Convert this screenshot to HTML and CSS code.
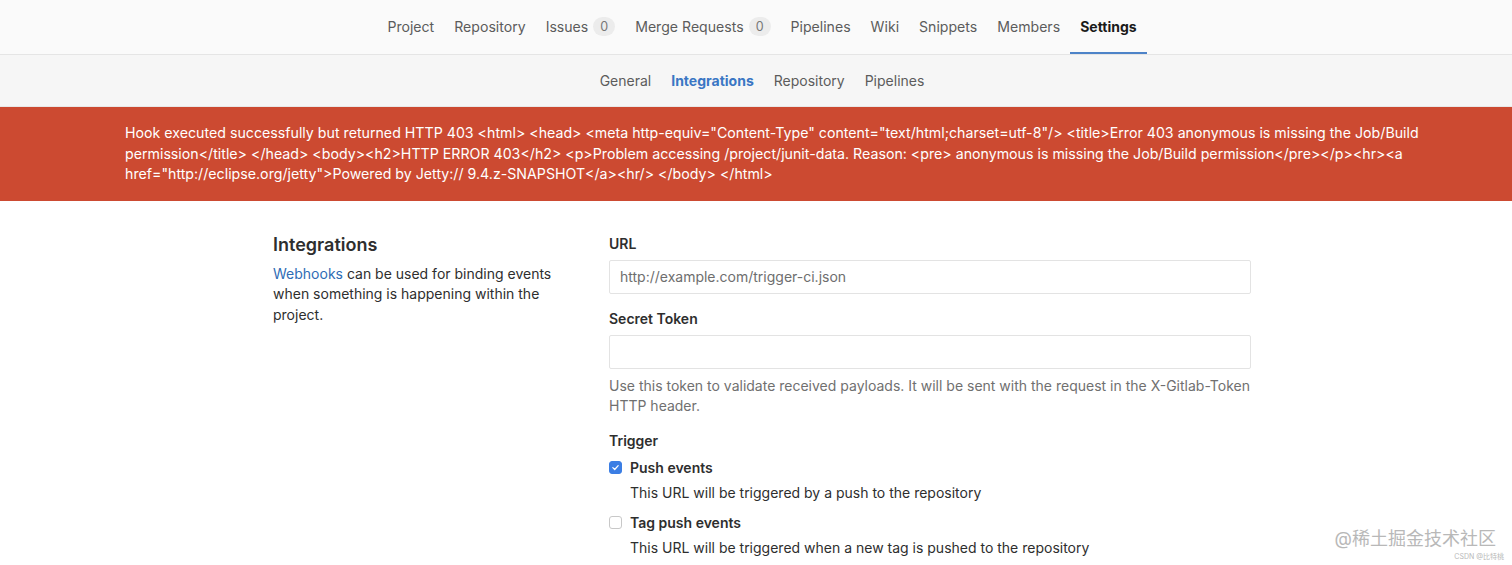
FILE: index.html
```html
<!DOCTYPE html>
<html>
<head>
<meta charset="utf-8">
<link rel="stylesheet" href="styles.css">
</head>
<body>
<header class="topnav">
  <nav class="nav-inner">
    <a class="nav-item">Project</a>
    <a class="nav-item">Repository</a>
    <a class="nav-item">Issues <span class="badge">0</span></a>
    <a class="nav-item">Merge Requests <span class="badge">0</span></a>
    <a class="nav-item">Pipelines</a>
    <a class="nav-item">Wiki</a>
    <a class="nav-item">Snippets</a>
    <a class="nav-item">Members</a>
    <a class="nav-item active">Settings</a>
  </nav>
</header>
<div class="subnav">
  <nav class="nav-inner">
    <a class="sub-item">General</a>
    <a class="sub-item active">Integrations</a>
    <a class="sub-item">Repository</a>
    <a class="sub-item">Pipelines</a>
  </nav>
</div>
<div class="flash">
  <span class="flash-line">Hook executed successfully but returned HTTP 403 &lt;html&gt; &lt;head&gt; &lt;meta http-equiv="Content-Type" content="text/html;charset=utf-8"/&gt; &lt;title&gt;Error 403 anonymous is missing the Job/Build</span>
  <span class="flash-line">permission&lt;/title&gt; &lt;/head&gt; &lt;body&gt;&lt;h2&gt;HTTP ERROR 403&lt;/h2&gt; &lt;p&gt;Problem accessing /project/junit-data. Reason: &lt;pre&gt; anonymous is missing the Job/Build permission&lt;/pre&gt;&lt;/p&gt;&lt;hr&gt;&lt;a</span>
  <span class="flash-line">href="http://eclipse.org/jetty"&gt;Powered by Jetty:// 9.4.z-SNAPSHOT&lt;/a&gt;&lt;hr/&gt; &lt;/body&gt; &lt;/html&gt;</span>
</div>
<main class="content">
  <section class="intro">
    <h4 class="intro-title">Integrations</h4>
    <p class="intro-text"><a class="link">Webhooks</a> can be used for binding events when something is happening within the project.</p>
  </section>
  <section class="form">
    <div class="field">
      <label class="label">URL</label>
      <div class="input"><span class="placeholder">http://example.com/trigger-ci.json</span></div>
    </div>
    <div class="field">
      <label class="label">Secret Token</label>
      <div class="input"></div>
      <p class="help">Use this token to validate received payloads. It will be sent with the request in the X-Gitlab-Token HTTP header.</p>
    </div>
    <div class="field trigger">
      <label class="label">Trigger</label>
      <div class="check-row">
        <span class="checkbox checked">
          <svg viewBox="0 0 14 14" width="14" height="14"><path d="M3.6 7.2 L6 9.5 L10.4 4.6" fill="none" stroke="#fff" stroke-width="1.6" stroke-linecap="round" stroke-linejoin="round"/></svg>
        </span>
        <span class="check-label">Push events</span>
      </div>
      <p class="check-help">This URL will be triggered by a push to the repository</p>
      <div class="check-row second">
        <span class="checkbox"></span>
        <span class="check-label">Tag push events</span>
      </div>
      <p class="check-help">This URL will be triggered when a new tag is pushed to the repository</p>
    </div>
  </section>
</main>
<div class="watermark">
  <span class="wm-main">@稀土掘金技术社区</span>
  <span class="wm-sub">CSDN @比特桃</span>
</div>
</body>
</html>
```
FILE: styles.css
```css
html, body {
  margin: 0;
  padding: 0;
  background: #fff;
  height: 565px;
  overflow: hidden;
}
body {
  font-family: Inter, "Liberation Sans", "Noto Sans CJK SC", sans-serif;
  font-size: 14px;
  color: #2e2e2e;
  position: relative;
}
.topnav {
  background: #fafafa;
  border-bottom: 1px solid #e5e5e5;
  height: 54px;
}
.nav-inner {
  display: flex;
  justify-content: center;
  height: 100%;
  padding-left: 12px;
}
.nav-item {
  display: flex;
  align-items: center;
  padding: 0 10px;
  color: #5c5c5c;
  font-size: 14.1px;
  border-bottom: 2px solid transparent;
  box-sizing: border-box;
  height: 54px;
  padding-top: 1px;
}
.nav-item.active {
  color: #1a1a1a;
  font-weight: 700;
  font-size: 14px;
  border-bottom-color: #4d83c8;
}
.badge {
  display: inline-block;
  margin-left: 5px;
  background: #ececec;
  color: #777;
  font-size: 12.5px;
  border-radius: 10px;
  padding: 0 7px;
  line-height: 19px;
}
.subnav {
  background: #f6f6f6;
  height: 51px;
  border-bottom: 1px solid #e8e8e8;
}
.sub-item {
  display: flex;
  align-items: center;
  padding: 0 10px;
  color: #5c5c5c;
  font-size: 14px;
}
.sub-item.active {
  color: #3a76c4;
  font-weight: 700;
}
.flash {
  background: #cc4a31;
  color: #fff;
  padding: 16px 0 16px 125px;
  line-height: 20.5px;
  font-size: 14.2px;
}
.flash-line {
  display: block;
  white-space: nowrap;
}
.content {
  display: grid;
  grid-template-columns: 336px 642px;
  margin-left: 273px;
  padding-top: 31px;
}
.intro {
  padding-top: 2px;
}
.intro-title {
  margin: 0;
  font-size: 18px;
  font-weight: 600;
  line-height: 22px;
  color: #2e2e2e;
}
.intro-text {
  margin: 8px 0 0;
  width: 290px;
  line-height: 20.5px;
  color: #2e2e2e;
}
.link {
  color: #2f6db5;
}
.field {
  display: flex;
  flex-direction: column;
}
.field + .field {
  margin-top: 13px;
}
.field.trigger {
  margin-top: 12px;
}
.label {
  font-size: 14px;
  font-weight: 600;
  line-height: 20px;
  color: #2e2e2e;
  margin-top: 2px;
}
.input {
  margin-top: 6px;
  height: 34px;
  box-sizing: border-box;
  border: 1px solid #e3e3e3;
  border-radius: 2px;
  display: flex;
  align-items: center;
  padding: 0 10px;
}
.placeholder {
  color: #6e6e6e;
  font-size: 14px;
}
.help {
  margin: 7px 0 0;
  color: #707070;
  line-height: 20.5px;
  font-size: 14px;
}
.check-row {
  display: flex;
  align-items: center;
  gap: 8px;
  margin-top: 7px;
  height: 20px;
}
.check-row.second {
  margin-top: 10px;
}
.checkbox {
  width: 13px;
  height: 13px;
  box-sizing: border-box;
  border: 1px solid #c8c8c8;
  border-radius: 3px;
  background: #fff;
  display: flex;
  align-items: center;
  justify-content: center;
}
.checkbox svg {
  width: 13px;
  height: 13px;
}
.checkbox.checked {
  background: #3b7ee4;
  border-color: #3b7ee4;
}
.check-label {
  font-size: 14px;
  font-weight: 600;
}
.check-help {
  margin: 5px 0 0 21px;
  line-height: 20px;
  font-size: 14px;
  color: #2e2e2e;
}
.watermark {
  position: absolute;
  right: 16px;
  bottom: 2px;
  display: flex;
  flex-direction: column;
  align-items: flex-end;
}
.wm-main {
  font-size: 18px;
  color: #b8b8b8;
  line-height: 24px;
}
.wm-sub {
  font-size: 7px;
  color: #b8b8b8;
  line-height: 12px;
  margin-right: -8px;
}
```
